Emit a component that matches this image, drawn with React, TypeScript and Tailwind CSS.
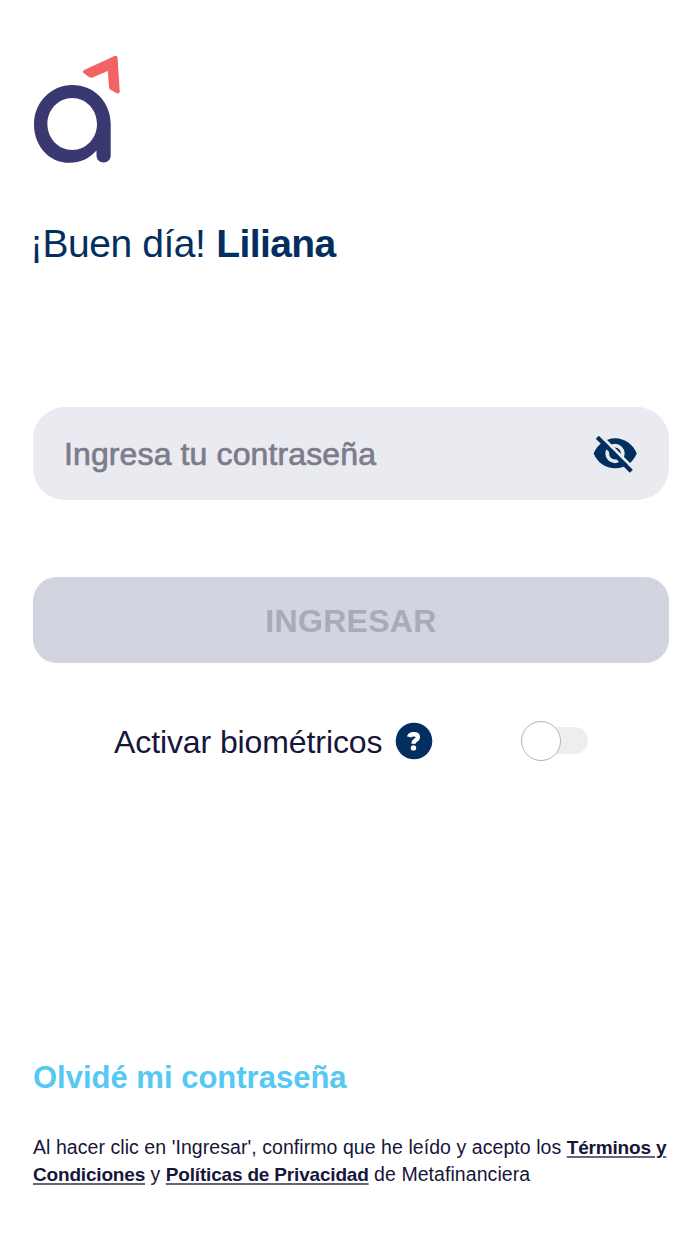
import { useState } from "react";

export default function LoginPage() {
  const [password, setPassword] = useState("");
  const [visible, setVisible] = useState(false);
  const [biometricos, setBiometricos] = useState(false);

  return (
    <main className="flex min-h-[1244px] w-[700px] flex-col bg-white pt-[50px] pr-[31px] pl-[33px] font-['Liberation_Sans',Arial,sans-serif] text-[#17163a]">
      <Logo />

      <h1 className="mt-[51px] -ml-[3px] text-[39px] leading-[46px] whitespace-nowrap text-[#032f60]">
        <span className="tracking-[-0.45px]">¡Buen día!</span>{" "}
        <strong className="font-bold tracking-[-0.6px]">Liliana</strong>
      </h1>

      <form onSubmit={e => e.preventDefault()} className="mt-[140px]">
        <div className="flex h-[93px] items-center rounded-[32px] bg-[#eaebf1] pr-[32px] pl-[31px]">
          <input
            type={visible ? "text" : "password"}
            value={password}
            onChange={e => setPassword(e.target.value)}
            placeholder="Ingresa tu contraseña"
            className="h-[60px] min-w-0 flex-1 bg-transparent pt-[2px] text-[32px] tracking-[0.12px] outline-none [-webkit-text-stroke:0.7px_#7c7c8c] placeholder:text-[#7c7c8c]"
          />
          <button type="button" aria-label="Mostrar contraseña" onClick={() => setVisible(!visible)}>
            <EyeOff />
          </button>
        </div>

        <button
          type="submit"
          className="mt-[77px] flex h-[86px] w-full items-center justify-center rounded-[24px] bg-[#d2d4e0] pt-[2px] text-[32px] font-bold tracking-[0.3px] text-[#a9abb7]"
        >
          INGRESAR
        </button>
      </form>

      <div className="mt-[57px] flex h-[42px] items-center pl-[81px]">
        <span className="pt-px text-[32px] leading-[40px] tracking-[-0.1px] whitespace-nowrap">Activar biométricos</span>
        <Help />
        <button
          type="button"
          role="switch"
          aria-checked={biometricos}
          aria-label="Activar biométricos"
          onClick={() => setBiometricos(!biometricos)}
          className="mr-[81px] mb-px ml-auto flex h-[27px] w-[67px] items-center rounded-full bg-[#eeeeee]"
        >
          <span className={biometricos ? "ml-[27px] size-[40px] shrink-0 rounded-full border border-[#b5b5b5] bg-white" : "size-[40px] shrink-0 rounded-full border border-[#b5b5b5] bg-white"} />
        </button>
      </div>

      <a href="#" className="mt-[296px] self-start text-[31px] leading-[40px] font-bold whitespace-nowrap text-[#55c8f4]">
        Olvidé mi contraseña
      </a>

      <div className="mt-[36px] text-[19.5px] leading-[27px] tracking-[0.06px] whitespace-nowrap">
        <p>
          Al hacer clic en 'Ingresar', confirmo que he leído y acepto los <Legal>Términos y</Legal>
        </p>
        <p>
          <Legal>Condiciones</Legal> y <Legal>Políticas de Privacidad</Legal> de Metafinanciera
        </p>
      </div>
    </main>
  );
}

function Legal({ children }: { children: React.ReactNode }) {
  return (
    <a href="#" className="text-[19px] font-bold tracking-[-0.18px] underline decoration-[#65657c] decoration-[1.5px] underline-offset-[2px]">
      {children}
    </a>
  );
}

function Logo() {
  return (
    <svg width="90" height="120" viewBox="33 50 90 120" className="block" role="img" aria-label="Logo">
      <path
        fill="#3a3870"
        fillRule="evenodd"
        d="M72.4 85C51 85 34 102.500 34 124.200C34 146 49 162.800 69.500 162.800C80 162.800 89.500 158.500 96.500 150.500V155.300C96.500 159.500 99.500 162.500 103.600 162.500C107.700 162.500 110.700 159.500 110.700 155.300V124C110.700 102 94 85 72.400 85ZM72.300 98C86 98 97 109.500 97 124C97 138.500 86 150 72.300 150C58.500 150 47.400 138.500 47.400 124C47.400 109.500 58.500 98 72.300 98Z"
      />
      <path
        fill="#f26364"
        d="M84.200 69.900L114.500 56C116.200 55.300 117.500 56.200 117.600 57.900L119.700 91.300C119.800 93.200 118.400 94 116.800 93.200L110.500 89.700C109.500 89.100 109 88.200 109 87L107.900 70.900L92.500 77.400C91.300 77.900 90.300 77.700 89.400 77.200L83.800 73.200C82.400 72.100 82.600 70.600 84.200 69.900Z"
      />
    </svg>
  );
}

function EyeOff() {
  return (
    <svg width="44" height="40" viewBox="593 434 44 40" className="block">
      <path fill="#032f60" d="M593.700 453.500C597.200 444.500 605.500 438.200 615.200 438.200S633.200 444.500 636.700 453.500C633.200 462.500 624.900 468.300 615.200 468.300S597.200 462.500 593.700 453.500Z" />
      <circle cx="615" cy="453.500" r="7.800" fill="none" stroke="#eaebf1" strokeWidth="3.800" />
      <path d="M599.500 434.500L634 469" stroke="#eaebf1" strokeWidth="3" />
      <path d="M597.300 437.300L631.300 471.300" stroke="#032f60" strokeWidth="4.200" />
    </svg>
  );
}

function Help() {
  return (
    <svg width="38" height="38" viewBox="0 0 38 38" className="ml-[12.5px] block shrink-0">
      <circle cx="19" cy="19" r="18.300" fill="#032f60" />
      <path d="M14.200 15C14.600 13 16.300 12.200 18.700 12.200C21.300 12.200 22.900 13.300 22.900 15.200C22.900 18.200 18.500 18 18.500 21.700" fill="none" stroke="white" strokeWidth="4.400" />
      <circle cx="18.500" cy="25.900" r="2.700" fill="white" />
    </svg>
  );
}
